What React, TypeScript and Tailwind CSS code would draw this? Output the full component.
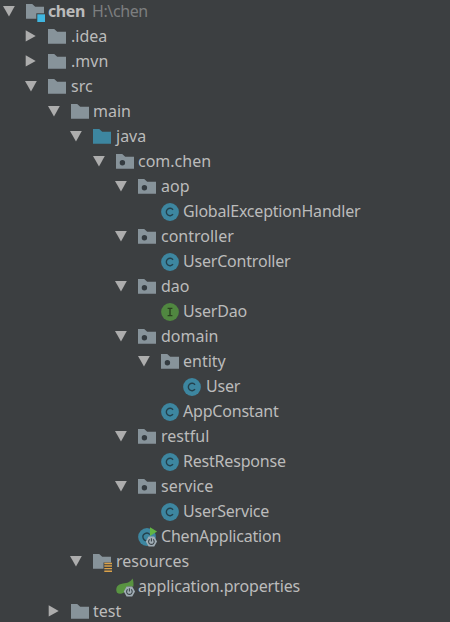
import type { ReactNode } from "react";
import clsx from "clsx";

type IconKind =
  | "module"
  | "folder"
  | "source"
  | "package"
  | "class"
  | "interface"
  | "boot"
  | "resources"
  | "spring";

interface TreeItem {
  name: string;
  level: number;
  icon: IconKind;
  state?: "open" | "closed";
  path?: string;
}

const items: TreeItem[] = [
  { name: "chen", level: 0, icon: "module", state: "open", path: "H:\\chen" },
  { name: ".idea", level: 1, icon: "folder", state: "closed" },
  { name: ".mvn", level: 1, icon: "folder", state: "closed" },
  { name: "src", level: 1, icon: "folder", state: "open" },
  { name: "main", level: 2, icon: "folder", state: "open" },
  { name: "java", level: 3, icon: "source", state: "open" },
  { name: "com.chen", level: 4, icon: "package", state: "open" },
  { name: "aop", level: 5, icon: "package", state: "open" },
  { name: "GlobalExceptionHandler", level: 6, icon: "class" },
  { name: "controller", level: 5, icon: "package", state: "open" },
  { name: "UserController", level: 6, icon: "class" },
  { name: "dao", level: 5, icon: "package", state: "open" },
  { name: "UserDao", level: 6, icon: "interface" },
  { name: "domain", level: 5, icon: "package", state: "open" },
  { name: "entity", level: 6, icon: "package", state: "open" },
  { name: "User", level: 7, icon: "class" },
  { name: "AppConstant", level: 6, icon: "class" },
  { name: "restful", level: 5, icon: "package", state: "open" },
  { name: "RestResponse", level: 6, icon: "class" },
  { name: "service", level: 5, icon: "package", state: "open" },
  { name: "UserService", level: 6, icon: "class" },
  { name: "ChenApplication", level: 5, icon: "boot" },
  { name: "resources", level: 3, icon: "resources", state: "open" },
  { name: "application.properties", level: 4, icon: "spring" },
  { name: "test", level: 2, icon: "folder", state: "closed" },
];

const INDENT = 22.5;

function Folder({ color = "#87939a" }: { color?: string }) {
  return <path d="M0 1h6.2l3 2.8H18v11.9H0z" fill={color} />;
}

// Small hexagon with a power symbol, used by the Spring Boot icons
function PowerBadge() {
  return (
    <>
      <path d="M10.6 8.4h5.6l2.8 5.1-2.8 5.1h-5.6l-2.8-5.1z" fill="#a1adb5" />
      <path
        d="M11.7 11.4a2.8 2.8 0 1 0 3.4 0M13.4 10.2v3.4"
        fill="none"
        stroke="#3c4449"
        strokeWidth="1.1"
      />
    </>
  );
}

function Letter({ kind }: { kind: "class" | "interface" }) {
  return (
    <>
      <circle cx="9" cy="9" r="8.9" fill={kind === "class" ? "#3d86a0" : "#508740"} />
      {kind === "class" ? (
        <path
          d="M12 6.8a3.7 3.7 0 1 0 0 4.4"
          fill="none"
          stroke="#24414d"
          strokeWidth="1.4"
        />
      ) : (
        <path d="M6.6 5.4h4.8M9 5.4v7.2M6.6 12.6h4.8" stroke="#29411f" strokeWidth="1.4" />
      )}
    </>
  );
}

function renderIcon(kind: IconKind): ReactNode {
  switch (kind) {
    case "module":
      return (
        <>
          <Folder />
          <path d="M10.3 10.3H19V19h-8.7z" fill="#3c3f41" />
          <path d="M11.3 11.3H19V19h-7.7z" fill="#40b6e0" />
        </>
      );
    case "folder":
      return <Folder />;
    case "source":
      return <Folder color="#3d86a0" />;
    case "package":
      return (
        <>
          <Folder />
          <circle cx="6.4" cy="9.7" r="2.7" fill="#343b40" />
        </>
      );
    case "class":
    case "interface":
      return <Letter kind={kind} />;
    case "boot":
      return (
        <>
          <circle cx="9" cy="9" r="8.9" fill="#3d86a0" />
          <path d="M11.8 6.7a3.8 3.8 0 1 0-2.2 6" fill="none" stroke="#24414d" strokeWidth="1.4" />
          <path d="M12-.8v8.8l7.1-4.4z" fill="#62b543" />
          <PowerBadge />
        </>
      );
    case "resources":
      return (
        <>
          <path d="M0 1h6.2l3 2.8H18v5.7h-7.5v6.2H0z" fill="#87939a" />
          <path
            d="M11.3 10.5h7.7M11.3 13h7.7M11.3 15.6h7.7M11.3 18.2h7.7"
            stroke="#dba24a"
            strokeWidth="1.4"
          />
        </>
      );
    case "spring":
      return (
        <>
          <path
            d="M1 14.8C-1 9.8 1.3 6.2 7 5.4c4.3-.4 7.4-1.1 9.5-4.9 1 2.5 1.2 4.8.9 7.9H11l-3 6c-2.4 1.4-4.6 1.8-7 .4z"
            fill="#599441"
          />
          <PowerBadge />
        </>
      );
  }
}

function Arrow({ state }: { state?: "open" | "closed" }) {
  return (
    <svg className="mt-[5px] h-3 w-3 shrink-0" viewBox="0 0 12 12" aria-hidden="true">
      {state === "open" && <path d="M0 .9h11.8L6 11.5z" fill="#adadad" />}
      {state === "closed" && <path d="M.7.2v11.4l10-5.7z" fill="#adadad" />}
    </svg>
  );
}

function TreeRow({ item }: { item: TreeItem }) {
  const isMixedCase = /[A-Z]/.test(item.name);

  return (
    <li
      className="flex h-[25px] items-start whitespace-nowrap"
      style={{ paddingLeft: 3 + Math.floor(item.level * INDENT) }}
    >
      <Arrow state={item.state} />
      <svg
        className="ml-[11px] mt-[3px] h-[18px] w-[18px] shrink-0 overflow-visible"
        viewBox="0 0 18 18"
        aria-hidden="true"
      >
        {renderIcon(item.icon)}
      </svg>
      <span
        className={clsx(
          "text-base leading-[23px] text-[#bbbbbb]",
          item.level % 2 === 0 ? "ml-1" : "ml-[5px]",
          item.level === 0 && "font-bold tracking-[-0.4px]",
          isMixedCase && "tracking-[-0.2px]",
          item.icon === "spring" && "tracking-[-0.14px]"
        )}
      >
        {item.name}
      </span>
      {item.path && (
        <span className="ml-[7px] text-base leading-[23px] tracking-[-0.4px] text-[#7c7e7f]">
          {item.path}
        </span>
      )}
    </li>
  );
}

export default function App() {
  return (
    <main className="h-[622px] w-full overflow-hidden bg-[#3c3f41] font-['Noto_Sans',sans-serif]">
      <ul>
        {items.map((item, i) => (
          <TreeRow key={i} item={item} />
        ))}
      </ul>
    </main>
  );
}
